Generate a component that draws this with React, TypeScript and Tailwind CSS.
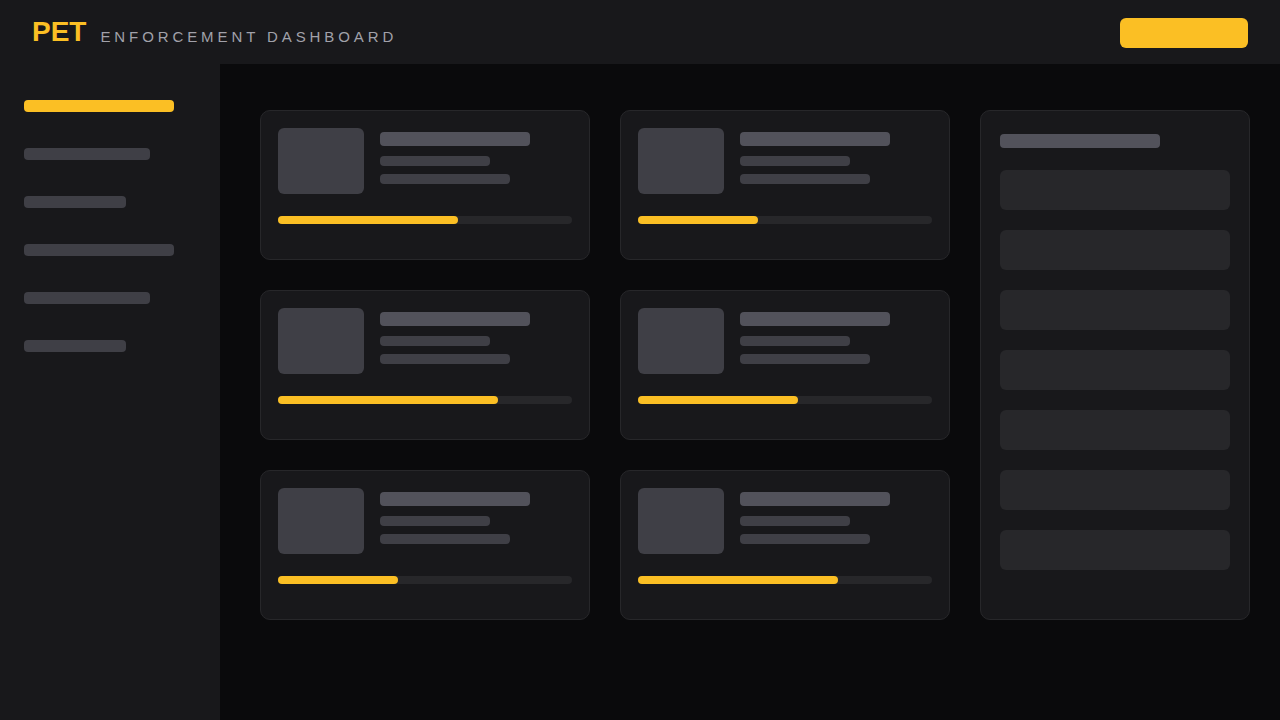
const NAV = [
  { w: 'w-[150px]', active: true },
  { w: 'w-[126px]', active: false },
  { w: 'w-[102px]', active: false },
  { w: 'w-[150px]', active: false },
  { w: 'w-[126px]', active: false },
  { w: 'w-[102px]', active: false }
];

const CARDS = [180, 120, 220, 160, 120, 200];

function Card({ progress }: { progress: number }) {
  return (
    <div className="h-[150px] rounded-[10px] border border-[#27272a] bg-[#18181b] p-[17px]">
      <div className="flex gap-4">
        <div className="h-[66px] w-[86px] rounded-md bg-[#3f3f46]" />
        <div className="flex flex-col pt-1">
          <div className="h-[14px] w-[150px] rounded bg-[#52525b]" />
          <div className="mt-[10px] h-[10px] w-[110px] rounded bg-[#3f3f46]" />
          <div className="mt-2 h-[10px] w-[130px] rounded bg-[#3f3f46]" />
        </div>
      </div>
      <div className="mt-[22px] h-2 w-[294px] rounded-full bg-[#27272a]">
        <div className="h-2 rounded-full bg-[#fbbf24]" style={{ width: progress }} />
      </div>
    </div>
  );
}

export default function App() {
  return (
    <div className="flex h-[720px] w-[1280px] flex-col bg-[#0a0a0c] font-['Liberation_Sans',Arial,sans-serif]">
      <header className="flex h-16 shrink-0 items-center justify-between bg-[#18181b] pl-8 pr-8">
        <div className="flex items-center gap-[14px]">
          <span className="text-[28px] font-bold leading-none text-[#fbbf24]">PET</span>
          <span className="pt-[8px] text-[15px] leading-none tracking-[0.26em] text-[#a1a1aa]">
            ENFORCEMENT DASHBOARD
          </span>
        </div>
        <button className="mt-[2px] h-[30px] w-32 rounded-md bg-[#fbbf24]" />
      </header>
      <div className="flex flex-1">
        <aside className="w-[220px] shrink-0 bg-[#18181b] px-6 pt-9">
          <div className="flex flex-col gap-9">
            {NAV.map((n, i) => (
              <div
                key={i}
                className={`h-3 rounded ${n.w} ${n.active ? 'bg-[#fbbf24]' : 'bg-[#3f3f46]'}`}
              />
            ))}
          </div>
        </aside>
        <main className="flex-1 pl-10 pt-[46px]">
          <div className="grid grid-cols-[330px_330px_270px] grid-rows-[150px_150px_150px] gap-[30px]">
            {CARDS.slice(0, 2).map((p, i) => (
              <Card key={i} progress={p} />
            ))}
            <div className="row-span-3 rounded-[10px] border border-[#27272a] bg-[#18181b] px-[19px] pt-[23px]">
              <div className="h-[14px] w-[160px] rounded bg-[#52525b]" />
              <div className="mt-[22px] flex flex-col gap-5">
                {Array.from({ length: 7 }).map((_, i) => (
                  <div key={i} className="h-10 rounded-md bg-[#27272a]" />
                ))}
              </div>
            </div>
            {CARDS.slice(2).map((p, i) => (
              <Card key={i + 2} progress={p} />
            ))}
          </div>
        </main>
      </div>
    </div>
  );
}
